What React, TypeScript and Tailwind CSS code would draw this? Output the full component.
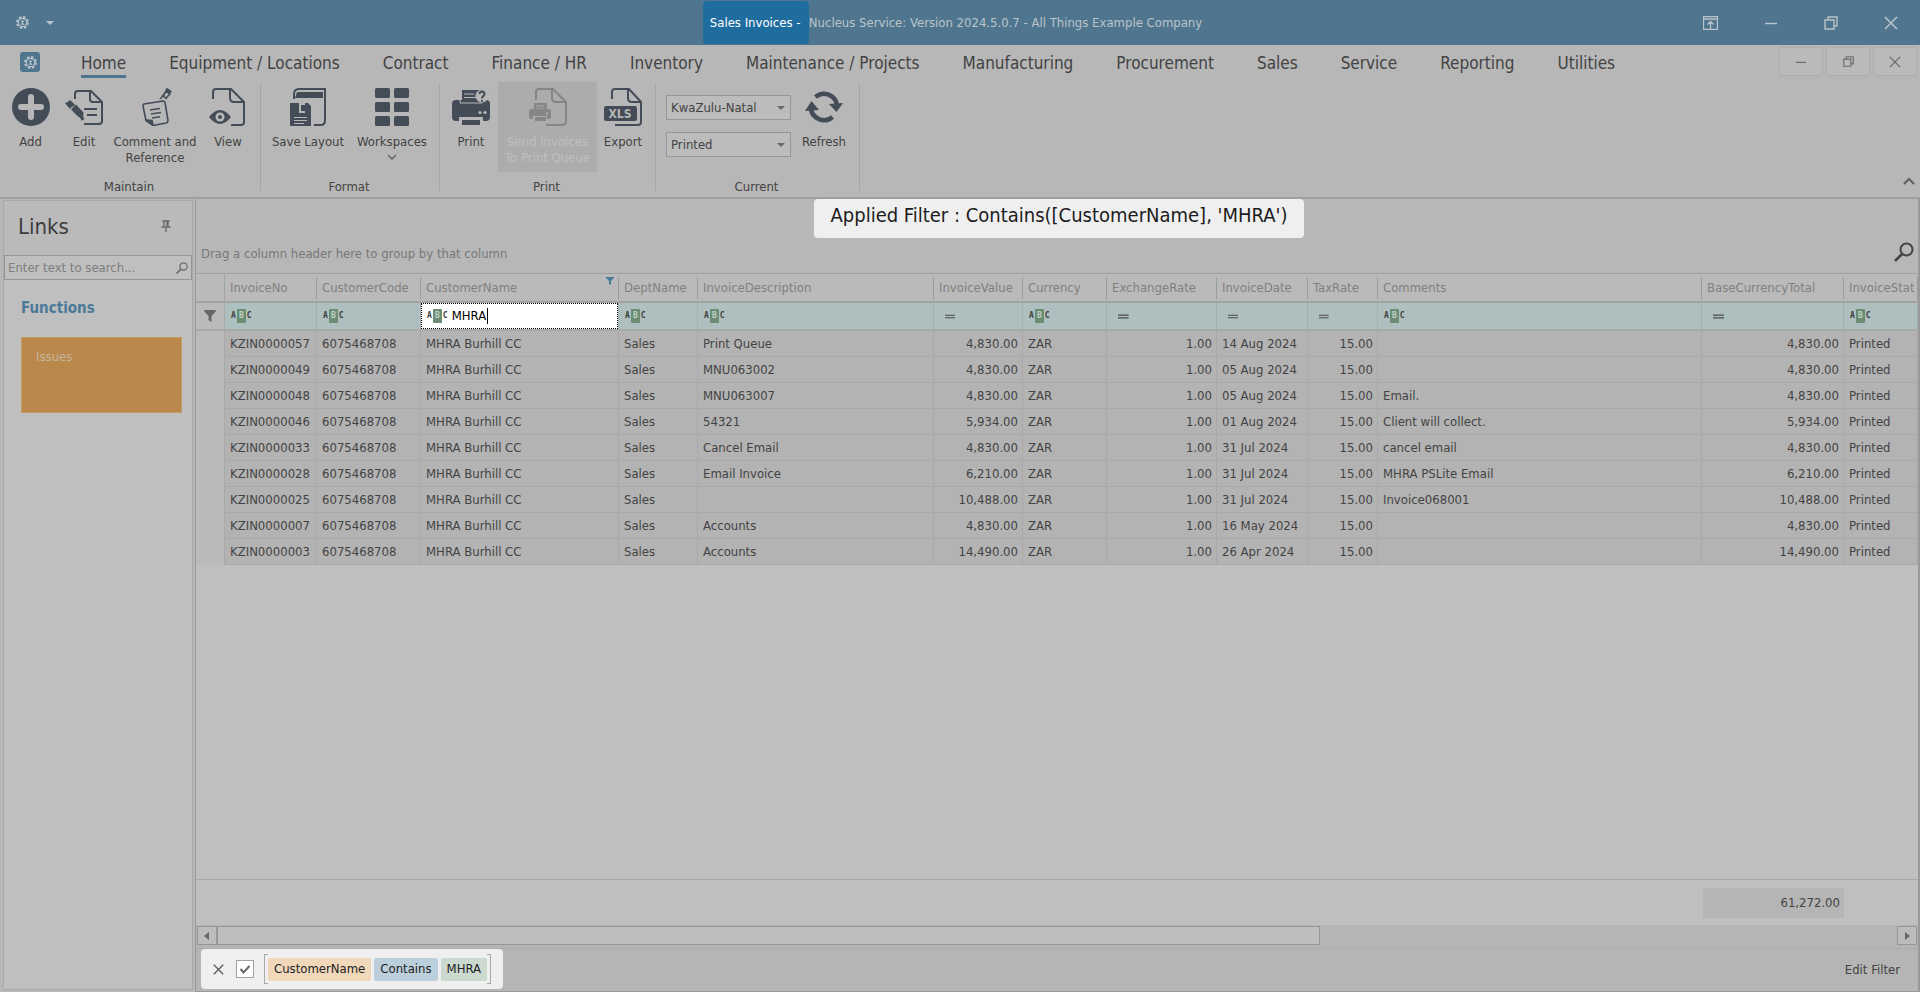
import { useState } from "react";
import type { ReactNode } from "react";

type FilterKind = "text" | "equals";

interface Column {
  name: string;
  width: string;
  filter: FilterKind;
  align?: "right";
}

const TABS = [
  "Home",
  "Equipment / Locations",
  "Contract",
  "Finance / HR",
  "Inventory",
  "Maintenance / Projects",
  "Manufacturing",
  "Procurement",
  "Sales",
  "Service",
  "Reporting",
  "Utilities",
];

const COLUMNS: Column[] = [
  { name: "InvoiceNo", width: "w-[92px]", filter: "text" },
  { name: "CustomerCode", width: "w-[104px]", filter: "text" },
  { name: "CustomerName", width: "w-[198px]", filter: "text" },
  { name: "DeptName", width: "w-[79px]", filter: "text" },
  { name: "InvoiceDescription", width: "w-[236px]", filter: "text" },
  { name: "InvoiceValue", width: "w-[89px]", filter: "equals", align: "right" },
  { name: "Currency", width: "w-[84px]", filter: "text" },
  { name: "ExchangeRate", width: "w-[110px]", filter: "equals", align: "right" },
  { name: "InvoiceDate", width: "w-[91px]", filter: "equals" },
  { name: "TaxRate", width: "w-[70px]", filter: "equals", align: "right" },
  { name: "Comments", width: "w-[324px]", filter: "text" },
  { name: "BaseCurrencyTotal", width: "w-[142px]", filter: "equals", align: "right" },
  { name: "InvoiceStat", width: "", filter: "text" },
];

// invoice no, description, value, date, comment
const INVOICES = [
  ["KZIN0000057", "Print Queue", "4,830.00", "14 Aug 2024", ""],
  ["KZIN0000049", "MNU063002", "4,830.00", "05 Aug 2024", ""],
  ["KZIN0000048", "MNU063007", "4,830.00", "05 Aug 2024", "Email."],
  ["KZIN0000046", "54321", "5,934.00", "01 Aug 2024", "Client will collect."],
  ["KZIN0000033", "Cancel Email", "4,830.00", "31 Jul 2024", "cancel email"],
  ["KZIN0000028", "Email Invoice", "6,210.00", "31 Jul 2024", "MHRA PSLite Email"],
  ["KZIN0000025", "", "10,488.00", "31 Jul 2024", "Invoice068001"],
  ["KZIN0000007", "Accounts", "4,830.00", "16 May 2024", ""],
  ["KZIN0000003", "Accounts", "14,490.00", "26 Apr 2024", ""],
];

const ROWS = INVOICES.map(([no, description, value, date, comment]) => [
  no,
  "6075468708",
  "MHRA Burhill CC",
  "Sales",
  description,
  value,
  "ZAR",
  "1.00",
  date,
  "15.00",
  comment,
  value,
  "Printed",
]);

/* ---------- icons ---------- */

function Icon({ children, className = "size-[38px] text-[#434c57]" }: { children: ReactNode; className?: string }) {
  return (
    <svg viewBox="0 0 38 38" className={className} fill="none" stroke="currentColor" strokeWidth="2" aria-hidden="true">
      {children}
    </svg>
  );
}

function GearIcon({ className }: { className: string }) {
  return (
    <svg viewBox="0 0 16 16" className={className} fill="none" stroke="currentColor" aria-hidden="true">
      <circle cx="8" cy="8" r="5.200" strokeWidth="1.500" />
      <circle cx="8" cy="8" r="6.800" strokeWidth="2.200" strokeDasharray="3 2.340" />
      <circle cx="8" cy="6.800" r="1.500" fill="currentColor" stroke="none" />
      <path d="M5.700 10.800c.4-2.400 4.200-2.400 4.600 0z" fill="currentColor" stroke="none" />
    </svg>
  );
}

const AddIcon = () => (
  <Icon>
    <circle cx="19" cy="19" r="19" fill="currentColor" stroke="none" />
    <path d="M19 9v20M9 19h20" stroke="#b7b7b7" strokeWidth="6" strokeLinecap="round" />
  </Icon>
);

const EditIcon = () => (
  <Icon>
    <path d="M10 11V6q0-3 3-3h13l11 11v19q0 3-3 3H19" />
    <path d="M25 3v8q0 3 3 3h9" />
    <path d="M19 21h13M22 27h10" />
    <path d="M0 15l5-2 4 3-4 5zM6 21.500l5-5 7.500 8-.5 6.500-5-2.500z" fill="currentColor" stroke="none" />
    <path d="M4 13l5 5M16 28l2 4" strokeWidth="3" />
  </Icon>
);

const CommentIcon = () => (
  <Icon>
    <g strokeWidth="1.600" strokeLinejoin="round">
      <path d="M8 16l19-3q1.500 0 2 1.500l3 18q0 2-2 2.500l-13 2.500-7-5L7 18q0-1.500 1-2z" />
      <path d="M14 22l10-1.500M15 26l10-1.500M16 30l8-1.300" />
      <path d="M10 32l6 .5 1 4.500z" fill="currentColor" />
      <path d="M24 11l5-5M26 7l5 4M27 8l3-5 4 3-4 4" />
      <path d="M30 1l5 3.500" strokeWidth="3" />
    </g>
  </Icon>
);

const ViewIcon = () => (
  <Icon>
    <path d="M4 11V4q0-3 3-3h15l13 13v20q0 3-3 3H22" />
    <path d="M21 1v9q0 4 4 4h10" />
    <path d="M0 29q11-14 22 0-11 14-22 0z" fill="currentColor" stroke="none" />
    <circle cx="11" cy="29" r="4.500" fill="#b7b7b7" stroke="none" />
    <circle cx="11" cy="29" r="2" fill="currentColor" stroke="none" />
  </Icon>
);

const SaveLayoutIcon = () => (
  <Icon>
    <path d="M5 11V6q0-5 5-5h26v31q0 5-4 5h-7" />
    <path d="M8 4h26v6H6z" fill="currentColor" stroke="none" />
    <path d="M1 15h3v10h12V15h3l3 3v20H1z" fill="currentColor" stroke="none" />
    <path d="M4 15h6v10H4z" fill="currentColor" stroke="none" />
    <path d="M12 17h4v6h-4z" fill="currentColor" stroke="none" />
    <path d="M5 29.500h13M5 32.500h13M5 35.500h10" stroke="#b7b7b7" strokeWidth="1" />
  </Icon>
);

const WorkspacesIcon = () => (
  <Icon>
    {[0, 14, 28].map((y) => (
      <g key={y} fill="currentColor" stroke="none">
        <rect x="2" y={y} width="15" height="10" rx="1.500" />
        <rect x="21" y={y} width="15" height="10" rx="1.500" />
      </g>
    ))}
  </Icon>
);

const PrintIcon = () => (
  <Icon>
    <path d="M10 2h18v13H10z" fill="currentColor" stroke="none" />
    <path d="M12 6h10M12 9.500h12" stroke="#b7b7b7" strokeWidth="1.200" />
    <rect x="0" y="12" width="38" height="21" rx="4" fill="currentColor" stroke="none" />
    <path d="M8 12v3h22v-3" stroke="#b7b7b7" strokeWidth="1" />
    <path d="M7 29h24v9H7z" fill="#b7b7b7" stroke="none" />
    <path d="M10 32h18v5H10z" fill="currentColor" stroke="none" />
    <circle cx="28" cy="24.500" r="1.600" fill="#b7b7b7" stroke="none" />
    <circle cx="33" cy="24.500" r="1.600" fill="#b7b7b7" stroke="none" />
    <circle cx="30" cy="8" r="6.500" fill="#b7b7b7" stroke="none" />
    <path d="M27.500 6q0-2.500 2.500-2.500t2.500 2.500q0 1.500-1.500 2.300-1 .7-1 2.200M30 12v1.800" />
  </Icon>
);

const SendIcon = () => (
  <Icon className="size-[38px] text-[#868686]">
    <path d="M7 12V4q0-3 3-3h14l13 13v19q0 4-4 4H17" />
    <path d="M23 1v9q0 4 4 4h10" />
    <path d="M5 15h13v8H5z" fill="currentColor" stroke="none" />
    <path d="M7 18h8M7 21h8" stroke="#acacac" strokeWidth="1" />
    <rect x="0" y="21" width="22" height="10" rx="2" fill="currentColor" stroke="none" />
    <path d="M4 28h14v5H4z" fill="#acacac" stroke="none" />
    <path d="M6 29h11v4H6z" fill="currentColor" stroke="none" />
    <circle cx="18" cy="25.500" r="1.200" fill="#acacac" stroke="none" />
  </Icon>
);

const ExportIcon = () => (
  <Icon>
    <path d="M8 11V4q0-3 3-3h14l12 13v20q0 3-3 3H11" />
    <path d="M24 1v9q0 4 4 4h9" />
    <rect x="0" y="18" width="33" height="15" rx="2" fill="currentColor" stroke="none" />
    <text
      x="16"
      y="30"
      textAnchor="middle"
      fill="#b7b7b7"
      stroke="none"
      className="font-['DejaVu_Sans_Condensed','DejaVu_Sans',sans-serif] text-[12px] font-bold"
    >
      XLS
    </text>
  </Icon>
);

const RefreshIcon = () => (
  <Icon>
    <path d="M10.500 9A13 13 0 0 1 32 18" strokeWidth="4.500" />
    <path d="M27.500 29A13 13 0 0 1 6 20" strokeWidth="4.500" />
    <path d="M24 16l14-1-6.500 9zM0 23l14-1-7.500-9z" fill="currentColor" stroke="none" />
  </Icon>
);

function CloseIcon({ className }: { className: string }) {
  return (
    <svg viewBox="0 0 14 14" className={className} stroke="currentColor" strokeWidth="1.500" aria-hidden="true">
      <path d="M1 1l12 12M13 1L1 13" />
    </svg>
  );
}

function RestoreIcon({ className }: { className: string }) {
  return (
    <svg viewBox="0 0 14 14" className={className} fill="none" stroke="currentColor" strokeWidth="1.400" aria-hidden="true">
      <path d="M1 4h9v9H1zM4 4V1h9v9h-3" />
    </svg>
  );
}

function MinimizeIcon({ className }: { className: string }) {
  return (
    <svg viewBox="0 0 14 14" className={className} stroke="currentColor" strokeWidth="1.400" aria-hidden="true">
      <path d="M1 7.500h12" />
    </svg>
  );
}

function SearchIcon({ className }: { className: string }) {
  return (
    <svg viewBox="0 0 20 20" className={className} fill="none" stroke="currentColor" aria-hidden="true">
      <circle cx="12.500" cy="7.500" r="6" strokeWidth="2" />
      <path d="M8 12l-7 7" strokeWidth="2.500" />
    </svg>
  );
}

function FunnelIcon({ className }: { className: string }) {
  return (
    <svg viewBox="0 0 12 12" className={className} fill="currentColor" aria-hidden="true">
      <path d="M0 0h12v1L7.500 6v6L4.500 10V6L0 1z" />
    </svg>
  );
}

function Arrow({ className, d }: { className: string; d: string }) {
  return (
    <svg viewBox="0 0 8 8" className={className} fill="currentColor" aria-hidden="true">
      <path d={d} />
    </svg>
  );
}

function AbcIcon() {
  return (
    <span className="flex items-center gap-px font-['DejaVu_Sans_Mono',monospace] text-[8px] leading-[14px] font-bold text-[#3d3d3d]">
      A<span className="w-[9px] rounded-[1px] bg-[#6a8d73] text-center text-[#c3cfc6]">B</span>C
    </span>
  );
}

/* ---------- ribbon ---------- */

function RibbonButton({
  icon,
  label,
  width,
  disabled = false,
  dropDown = false,
}: {
  icon: ReactNode;
  label: ReactNode;
  width: string;
  disabled?: boolean;
  dropDown?: boolean;
}) {
  return (
    <button
      type="button"
      disabled={disabled}
      className={`flex h-[90px] shrink-0 flex-col items-center pt-[6px] text-center leading-4 ${width} ${
        disabled ? "bg-[#acacac] text-[#c0c0c0]" : "text-[#434343]"
      }`}
    >
      {icon}
      <span className="mt-2 whitespace-nowrap">{label}</span>
      {dropDown && (
        <svg viewBox="0 0 10 6" className="mt-1 h-[6px] w-[10px]" fill="none" stroke="#666" strokeWidth="1.500" aria-hidden="true">
          <path d="M1 1l4 4 4-4" />
        </svg>
      )}
    </button>
  );
}

function RibbonGroup({ caption, className, children }: { caption: string; className: string; children: ReactNode }) {
  return (
    <div className={`relative flex flex-col justify-between ${className}`}>
      <div className="flex">{children}</div>
      <div className="pr-[3px] pb-[2px] text-center leading-4">{caption}</div>
      <span className="absolute right-0 bottom-[6px] h-[108px] w-px bg-[#a5a5a5]" />
    </div>
  );
}

function Combo({ label, value }: { label: string; value: string }) {
  return (
    <div className="relative h-[25px] w-[125px]">
      <select
        aria-label={label}
        defaultValue={value}
        className="h-full w-full appearance-none border border-[#969696] bg-[#bcbcbc] px-1 text-[#434343] outline-none"
      >
        <option>{value}</option>
      </select>
      <Arrow className="pointer-events-none absolute top-[9px] right-[6px] size-2 text-[#6b6b6b]" d="M0 2h8L4 6z" />
    </div>
  );
}

function TitleBar() {
  return (
    <header className="flex h-[45px] items-center bg-[#50768f] text-[#b9c3ca]">
      <div className="flex flex-1 items-center gap-[17px] pl-4">
        <GearIcon className="size-[13px]" />
        <Arrow className="size-2" d="M0 2h8L4 6z" />
      </div>
      <h1 className="flex items-center pr-4 whitespace-nowrap">
        <span className="flex h-[43px] w-[106px] items-center rounded-[4px] bg-[#1f6d9f] pl-[7px] text-white">
          Sales Invoices -
        </span>
        <span>Nucleus Service: Version 2024.5.0.7 - All Things Example Company</span>
      </h1>
      <div className="flex flex-1 items-center justify-end pr-[15px]">
        <button type="button" aria-label="Ribbon display" className="mr-[46px]">
          <svg viewBox="0 0 15 14" className="h-[14px] w-[15px]" fill="none" stroke="currentColor" aria-hidden="true">
            <path d="M.5.500h14v13H.5zM.5 3h14M7.500 13V5.500M4.500 8.500l3-3 3 3" strokeWidth="1.300" />
          </svg>
        </button>
        <button type="button" aria-label="Minimize window" className="mr-[46px]">
          <MinimizeIcon className="size-[14px]" />
        </button>
        <button type="button" aria-label="Restore window" className="mr-[46px]">
          <RestoreIcon className="size-[14px]" />
        </button>
        <button type="button" aria-label="Close window" className="mr-[7px]">
          <CloseIcon className="size-[14px]" />
        </button>
      </div>
    </header>
  );
}

function TabRow() {
  const mdiButton =
    "flex h-[29px] w-[44px] items-center justify-center rounded-[2px] border border-[#adadad] bg-[#bababa] text-[#6a6a6a]";

  return (
    <nav className="flex h-[37px] items-start justify-between pt-[2px]">
      <div className="flex items-start">
        <button
          type="button"
          aria-label="Application menu"
          className="mt-[5px] mr-[41px] ml-5 flex size-5 items-center justify-center rounded-[3px] bg-[#50768f] text-[#bac3c9]"
        >
          <GearIcon className="size-[13px]" />
        </button>
        <div className="flex gap-[43px] text-[17px]">
          {TABS.map((tab, index) => (
            <a
              key={tab}
              href="#"
              className={`h-[31px] border-b-[3px] pt-1 leading-6 whitespace-nowrap ${
                index === 0 ? "border-[#50768f]" : "border-transparent"
              }`}
            >
              {tab}
            </a>
          ))}
        </div>
      </div>
      <div className="flex gap-[3px] pr-[3px]">
        <button type="button" aria-label="Minimize document" className={mdiButton}>
          <MinimizeIcon className="size-3" />
        </button>
        <button type="button" aria-label="Restore document" className={mdiButton}>
          <RestoreIcon className="size-[11px]" />
        </button>
        <button type="button" aria-label="Close document" className={mdiButton}>
          <CloseIcon className="size-3" />
        </button>
      </div>
    </nav>
  );
}

function Ribbon() {
  return (
    <div className="flex h-[117px] justify-between border-b-2 border-[#9f9f9f]">
      <div className="flex">
        <RibbonGroup caption="Maintain" className="w-[261px]">
          <RibbonButton width="w-[61px]" icon={<AddIcon />} label="Add" />
          <RibbonButton width="w-[46px]" icon={<EditIcon />} label="Edit" />
          <RibbonButton
            width="w-[96px]"
            icon={<CommentIcon />}
            label={
              <>
                Comment and
                <br />
                Reference
              </>
            }
          />
          <RibbonButton width="w-[50px]" icon={<ViewIcon />} label="View" />
        </RibbonGroup>
        <RibbonGroup caption="Format" className="w-[179px] px-[5px]">
          <RibbonButton width="w-[84px]" icon={<SaveLayoutIcon />} label="Save Layout" />
          <RibbonButton width="w-[84px]" icon={<WorkspacesIcon />} label="Workspaces" dropDown />
        </RibbonGroup>
        <RibbonGroup caption="Print" className="w-[216px] px-1">
          <RibbonButton width="w-[54px]" icon={<PrintIcon />} label="Print" />
          <RibbonButton
            width="w-[99px]"
            icon={<SendIcon />}
            disabled
            label={
              <>
                Send Invoices
                <br />
                To Print Queue
              </>
            }
          />
          <RibbonButton width="w-[52px]" icon={<ExportIcon />} label="Export" />
        </RibbonGroup>
        <RibbonGroup caption="Current" className="w-[204px]">
          <div className="ml-[10px] flex flex-col gap-3 pt-[13px]">
            <Combo label="Branch" value="KwaZulu-Natal" />
            <Combo label="Invoice status" value="Printed" />
          </div>
          <RibbonButton width="w-[66px]" icon={<RefreshIcon />} label="Refresh" />
        </RibbonGroup>
      </div>
      <button type="button" aria-label="Collapse ribbon" className="mr-[5px] mb-3 self-end text-[#5f5f5f]">
        <svg viewBox="0 0 12 8" className="h-2 w-3" fill="none" stroke="currentColor" strokeWidth="2" aria-hidden="true">
          <path d="M1 7l5-5 5 5" />
        </svg>
      </button>
    </div>
  );
}

/* ---------- body ---------- */

function LinksPanel() {
  return (
    <aside className="mt-[1px] mr-[2px] mb-[2px] ml-[3px] flex w-[190px] shrink-0 flex-col border border-[#a9a9a9] bg-[#bfbfbf]">
      <div className="flex h-[54px] items-center justify-between bg-[#bababa] pr-[21px] pb-1 pl-[14px]">
        <h2 className="text-[22px] text-[#3c3c3c]">Links</h2>
        <button type="button" aria-label="Pin panel" className="text-[#666]">
          <svg viewBox="0 0 10 12" className="h-3 w-[10px]" fill="none" stroke="currentColor" strokeWidth="1.300" aria-hidden="true">
            <path d="M1.500 1h7M3 1v5M7 1v5M6 1v5M.5 7h9M5 7v5" />
          </svg>
        </button>
      </div>
      <label className="flex h-[25px] items-center border border-[#959595] bg-[#bfbfbf] px-[3px]">
        <input
          type="search"
          aria-label="Search links"
          placeholder="Enter text to search..."
          className="w-full min-w-0 bg-transparent outline-none placeholder:text-[#7d7d7d]"
        />
        <SearchIcon className="size-3 shrink-0 text-[#666]" />
      </label>
      <h3 className="mt-[18px] pl-[17px] text-[15px] leading-5 font-bold text-[#4b7a99]">Functions</h3>
      <a href="#" className="mt-[19px] mr-[10px] ml-[17px] h-[76px] border border-[#c39a66] bg-[#bb884b] px-[14px] pt-[9px] leading-5 text-[#c6b69f]">
        Issues
      </a>
    </aside>
  );
}

function FilterCell({
  column,
  value,
  onChange,
}: {
  column: Column;
  value: string;
  onChange: (value: string) => void;
}) {
  if (column.name === "CustomerName") {
    return (
      <div className="flex h-[26px] items-center gap-1 border border-dotted border-black bg-white pl-[5px] text-black">
        <AbcIcon />
        <input
          aria-label={`Filter ${column.name}`}
          value={value}
          onChange={(e) => onChange(e.target.value)}
          className="w-[36px] border-r border-black bg-transparent leading-4 outline-none"
        />
      </div>
    );
  }

  return (
    <div className={`flex h-[26px] items-center ${column.filter === "text" ? "pl-[6px]" : "pl-[11px]"}`}>
      {column.filter === "text" ? (
        <AbcIcon />
      ) : (
        <svg viewBox="0 0 12 5" className="h-[5px] w-3" stroke="#4a4a4a" aria-hidden="true">
          <path d="M0 1h12M0 4h12" strokeWidth="1.300" />
        </svg>
      )}
      <input aria-label={`Filter ${column.name}`} className="w-full min-w-0 bg-transparent px-1 outline-none" />
    </div>
  );
}

function InvoiceGrid() {
  const [customerFilter, setCustomerFilter] = useState("MHRA");

  return (
    <table className="w-full table-fixed border-separate border-spacing-0 text-[#434343]">
      <thead>
        <tr className="h-[29px] bg-[#bababa]">
          <th className="w-[29px] border-r border-b-2 border-[#a3a3a3]" />
          {COLUMNS.map((column) => (
            <th
              key={column.name}
              className={`border-b-2 border-[#a3a3a3] p-0 text-left font-normal whitespace-nowrap text-[#808080] ${column.width}`}
            >
              <div className="flex h-[22px] items-center justify-between overflow-hidden border-r border-[#9c9c9c] pl-[5px]">
                {column.name}
                {column.name === "CustomerName" && <FunnelIcon className="mr-1 size-2 self-start text-[#4b7a99]" />}
              </div>
            </th>
          ))}
        </tr>
        <tr className="h-[28px] bg-[#aebfbf]">
          <td className="border-r border-b-2 border-[#a9a9a9] bg-[#bababa] p-0">
            <FunnelIcon className="mx-auto size-3 text-[#666]" />
          </td>
          {COLUMNS.map((column) => (
            <td key={column.name} className="border-r border-b-2 border-[#a6b1b1] border-b-[#a9a9a9] p-0">
              <FilterCell column={column} value={customerFilter} onChange={setCustomerFilter} />
            </td>
          ))}
        </tr>
      </thead>
      <tbody>
        {ROWS.map((row) => (
          <tr key={row[0]} className="h-[26px] bg-[#b3b3b3]">
            <td className="border-r border-[#a9a9a9] bg-[#bababa] p-0" />
            {row.map((cell, index) => (
              <td
                key={COLUMNS[index].name}
                className={`overflow-hidden border-r border-b border-[#a9a9a9] py-0 pr-1 pl-[5px] whitespace-nowrap ${
                  COLUMNS[index].align === "right" ? "text-right" : ""
                }`}
              >
                {cell}
              </td>
            ))}
          </tr>
        ))}
      </tbody>
    </table>
  );
}

function HorizontalScroll() {
  const arrow = "flex h-full items-center justify-center border border-[#969696] bg-[#bcbcbc] text-[#666]";

  return (
    <div className="flex h-[23px] bg-[#b5b5b5] px-[1px] pt-[1px] pb-[3px]">
      <button type="button" aria-label="Scroll left" className={`w-5 ${arrow}`}>
        <Arrow className="size-2" d="M6 0v8L1 4z" />
      </button>
      <div className="flex flex-1">
        <div className="h-full w-21/32 border border-[#969696] bg-[#bebebe]" />
      </div>
      <button type="button" aria-label="Scroll right" className={`w-5 ${arrow}`}>
        <Arrow className="size-2" d="M2 0v8l5-4z" />
      </button>
    </div>
  );
}

function FilterBar() {
  const [enabled, setEnabled] = useState(true);
  const chip = "flex h-[23px] items-center rounded-[2px] px-[6px]";

  return (
    <div className="flex h-[44px] items-start justify-between border-t border-b border-t-[#adadad] border-b-[#999] bg-[#b5b5b5] pl-[5px]">
      <div className="flex h-10 items-center rounded-[4px] bg-[#efefef] pr-3 pl-3 text-[#222]">
        <button type="button" aria-label="Clear filter" className="mr-3 text-[#555]">
          <CloseIcon className="size-[11px]" />
        </button>
        <label className="relative mr-[10px] size-[18px]">
          <input
            type="checkbox"
            aria-label="Enable filter"
            checked={enabled}
            onChange={(e) => setEnabled(e.target.checked)}
            className="block size-full appearance-none border border-[#a0a0a0] bg-white"
          />
          {enabled && (
            <svg viewBox="0 0 18 18" className="pointer-events-none absolute inset-0 size-full" fill="none" stroke="#666" strokeWidth="2" aria-hidden="true">
              <path d="M4.500 9l3 3.500 6-6.500" />
            </svg>
          )}
        </label>
        <div className="flex h-[30px] items-stretch">
          <span className="w-1 border border-r-0 border-[#aaa]" />
          <div className="flex items-center gap-[3px]">
            <span className={`bg-[#f1d8bb] ${chip}`}>CustomerName</span>
            <span className={`bg-[#bccfdc] ${chip}`}>Contains</span>
            <span className={`bg-[#ccd9ce] ${chip}`}>MHRA</span>
          </div>
          <span className="w-1 border border-l-0 border-[#aaa]" />
        </div>
      </div>
      <button type="button" className="mr-[18px] self-center">
        Edit Filter
      </button>
    </div>
  );
}

export default function App() {
  return (
    <div className="flex min-h-screen flex-col overflow-hidden bg-[#b7b7b7] font-['DejaVu_Sans_Condensed','DejaVu_Sans',sans-serif] text-[13px] text-[#434343]">
      <TitleBar />
      <TabRow />
      <Ribbon />
      <div className="flex flex-1">
        <LinksPanel />
        <main className="flex min-w-0 flex-1 flex-col border-r-2 border-l border-[#999] bg-[#bfbfbf]">
          <section className="flex h-[75px] flex-col items-center justify-between border-b border-[#a0a0a0] bg-[#b7b7b7]">
            <p className="ml-[4px] flex h-[39px] items-center rounded-[4px] bg-[#efefef] px-4 pb-2 text-[20px] whitespace-nowrap text-[#1c1c1c]">
              Applied Filter : Contains([CustomerName], &apos;MHRA&apos;)
            </p>
            <div className="flex w-full items-end justify-between pr-1 pb-[11px] pl-[5px]">
              <span className="leading-4 text-[#777]">Drag a column header here to group by that column</span>
              <button type="button" aria-label="Find" className="text-[#444]">
                <SearchIcon className="size-5" />
              </button>
            </div>
          </section>
          <div className="flex-1">
            <InvoiceGrid />
          </div>
          <div className="flex h-[46px] justify-end border-t border-[#a9a9a9] pt-[8px]">
            <output className="mr-[74px] flex h-[30px] w-[141px] items-center justify-end bg-[#b5b5b5] pr-1">
              61,272.00
            </output>
          </div>
          <HorizontalScroll />
          <FilterBar />
        </main>
      </div>
    </div>
  );
}
